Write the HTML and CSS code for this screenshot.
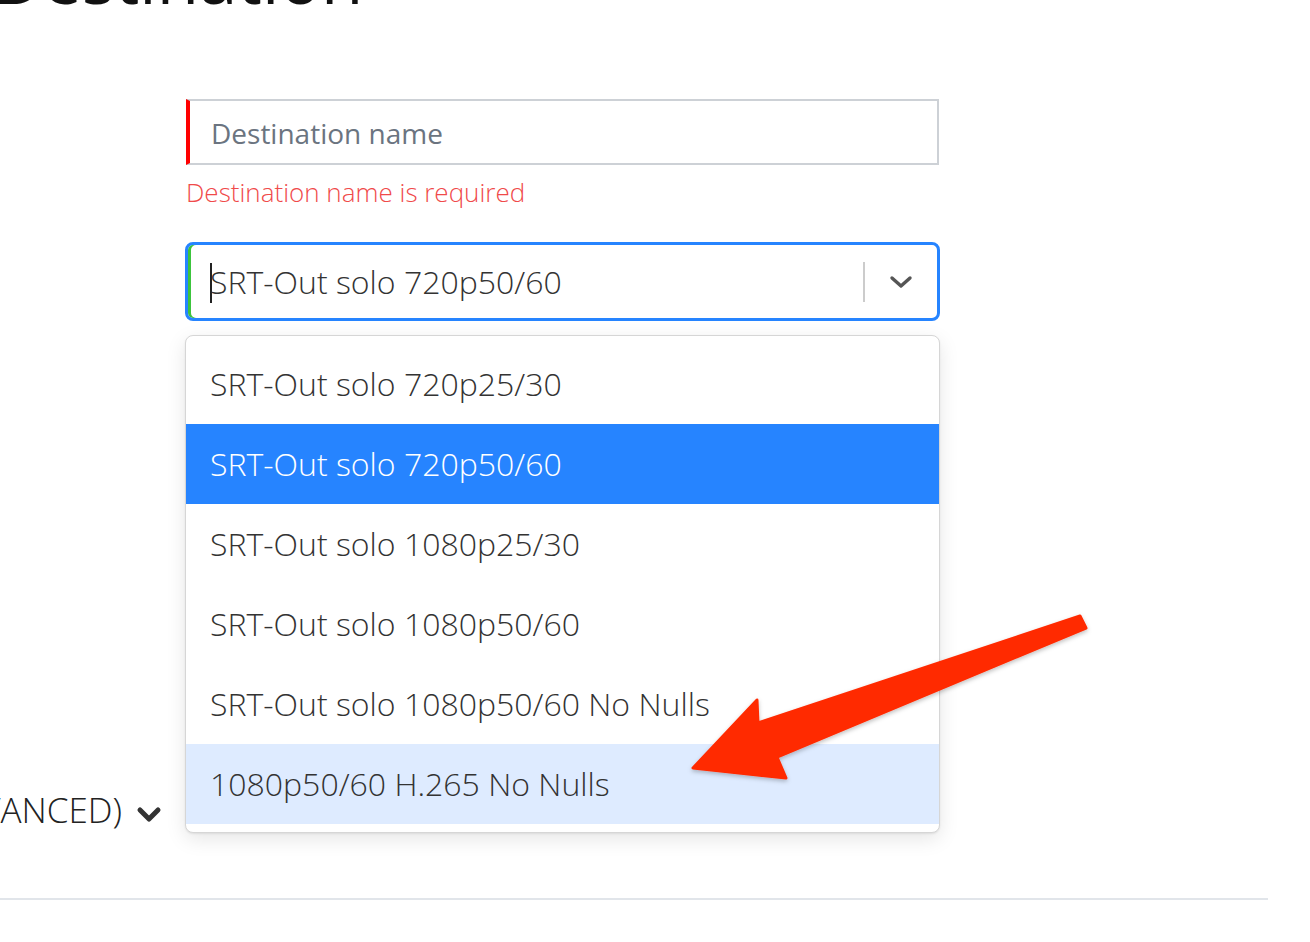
FILE: index.html
```html
<!DOCTYPE html>
<html lang="en">
<head>
<meta charset="utf-8">
<title>Destination</title>
<link rel="stylesheet" href="styles.css">
</head>
<body>
<div class="page">
  <h1 class="title">Destination</h1>
  <form class="form">
    <div class="field">
      <div class="text-input">Destination name</div>
      <div class="error">Destination name is required</div>
    </div>
    <div class="select-wrap">
      <div class="select">
        <div class="value"><span class="caret"></span>SRT-Out solo 720p50/60</div>
        <span class="sep"></span>
        <span class="indicator">
          <svg width="24" height="14" viewBox="0 0 24 14"><path d="M3 3 L12 11 L21 3" fill="none" stroke="#555" stroke-width="3.4" stroke-linecap="round" stroke-linejoin="round"/></svg>
        </span>
      </div>
      <ul class="menu">
        <li class="opt">SRT-Out solo 720p25/30</li>
        <li class="opt selected">SRT-Out solo 720p50/60</li>
        <li class="opt">SRT-Out solo 1080p25/30</li>
        <li class="opt">SRT-Out solo 1080p50/60</li>
        <li class="opt">SRT-Out solo 1080p50/60 No Nulls</li>
        <li class="opt focused">1080p50/60 H.265 No Nulls</li>
      </ul>
    </div>
  </form>
  <div class="advanced">
    <span class="adv-label">SETTINGS (ADVANCED)</span>
    <svg class="adv-chev" width="26" height="20" viewBox="0 0 26 20"><path d="M4 6 L13 15 L22 6" fill="none" stroke="#333" stroke-width="5" stroke-linecap="round" stroke-linejoin="round"/></svg>
  </div>
  <div class="rule"></div>
  <svg class="arrow" width="1310" height="942" viewBox="0 0 1310 942">
    <defs>
      <filter id="sh" x="-10%" y="-10%" width="120%" height="130%">
        <feDropShadow dx="0" dy="2" stdDeviation="2" flood-color="#000" flood-opacity="0.25"/>
      </filter>
    </defs>
    <polygon filter="url(#sh)" points="1080,616 758,723 757,700 693,768 786,778 777,757 1086,628" fill="#ff2a00" stroke="#ff2a00" stroke-width="3" stroke-linejoin="round"/>
  </svg>
</div>
</body>
</html>
```
FILE: styles.css
```css
html, body {
  margin: 0;
  padding: 0;
  background: #fff;
}
body {
  font-family: "Open Sans", "Liberation Sans", sans-serif;
  color: #333;
  overflow: hidden;
}
.page {
  position: relative;
  display: flow-root;
  width: 1310px;
  height: 942px;
}
.title {
  margin: -57px 0 0 -7px;
  font-size: 69px;
  line-height: 69px;
  font-weight: 400;
  color: #111;
}
.form {
  margin: 87px 0 0 185px;
  width: 755px;
}
.field {
  padding-left: 1px;
}
.text-input {
  box-sizing: border-box;
  width: 753px;
  height: 66px;
  border: 2px solid #cdd1d6;
  border-left: 4px solid #ff0000;
  padding-left: 21px;
  font-size: 28px;
  font-weight: 400;
  line-height: 64px;
  color: #6b7480;
}
.error {
  margin-top: 9px;
  font-size: 26px;
  line-height: 36px;
  font-weight: 300;
  color: #f04a4a;
}
.select-wrap {
  position: relative;
  margin-top: 32px;
}
.select {
  box-sizing: border-box;
  display: flex;
  align-items: center;
  width: 755px;
  height: 79px;
  border: 3px solid #2684ff;
  border-radius: 8px;
  box-shadow: inset 3px 0 0 #3cc43c;
}
.value {
  flex: 1;
  padding-left: 22px;
  font-size: 32px;
  font-weight: 300;
  color: #333;
  white-space: nowrap;
}
.caret {
  display: inline-block;
  width: 2px;
  height: 40px;
  margin-right: -2px;
  background: #222;
  vertical-align: -9px;
}
.sep {
  width: 2px;
  height: 40px;
  background: #cccccc;
}
.indicator {
  width: 72px;
  display: flex;
  justify-content: center;
  align-items: center;
}
.menu {
  position: absolute;
  top: calc(100% + 14px);
  left: 0;
  box-sizing: border-box;
  width: 755px;
  margin: 0;
  padding: 8px 0;
  list-style: none;
  background: #fff;
  border: 1px solid #d6d6d6;
  border-radius: 8px;
  box-shadow: 0 6px 20px rgba(0, 0, 0, 0.1), 0 1px 2px rgba(0, 0, 0, 0.08);
  z-index: 2;
}
.opt {
  height: 80px;
  line-height: 80px;
  padding-left: 24px;
  font-size: 32px;
  font-weight: 300;
  color: #333;
  white-space: nowrap;
}
.opt.selected {
  background: #2684ff;
  color: #fff;
}
.opt.focused {
  background: #deebff;
}
.advanced {
  display: flex;
  justify-content: flex-end;
  align-items: center;
  gap: 14px;
  width: 162px;
  margin-top: 469px;
  height: 40px;
}
.adv-label {
  white-space: nowrap;
  font-size: 35px;
  font-weight: 300;
  color: #222;
  line-height: 40px;
}
.adv-chev {
  flex: none;
  margin-top: 8px;
}
.rule {
  margin-top: 68px;
  width: 1268px;
  height: 2px;
  background: #e1e5ea;
}
.arrow {
  position: absolute;
  left: 0;
  top: 0;
  pointer-events: none;
  z-index: 3;
}
```
